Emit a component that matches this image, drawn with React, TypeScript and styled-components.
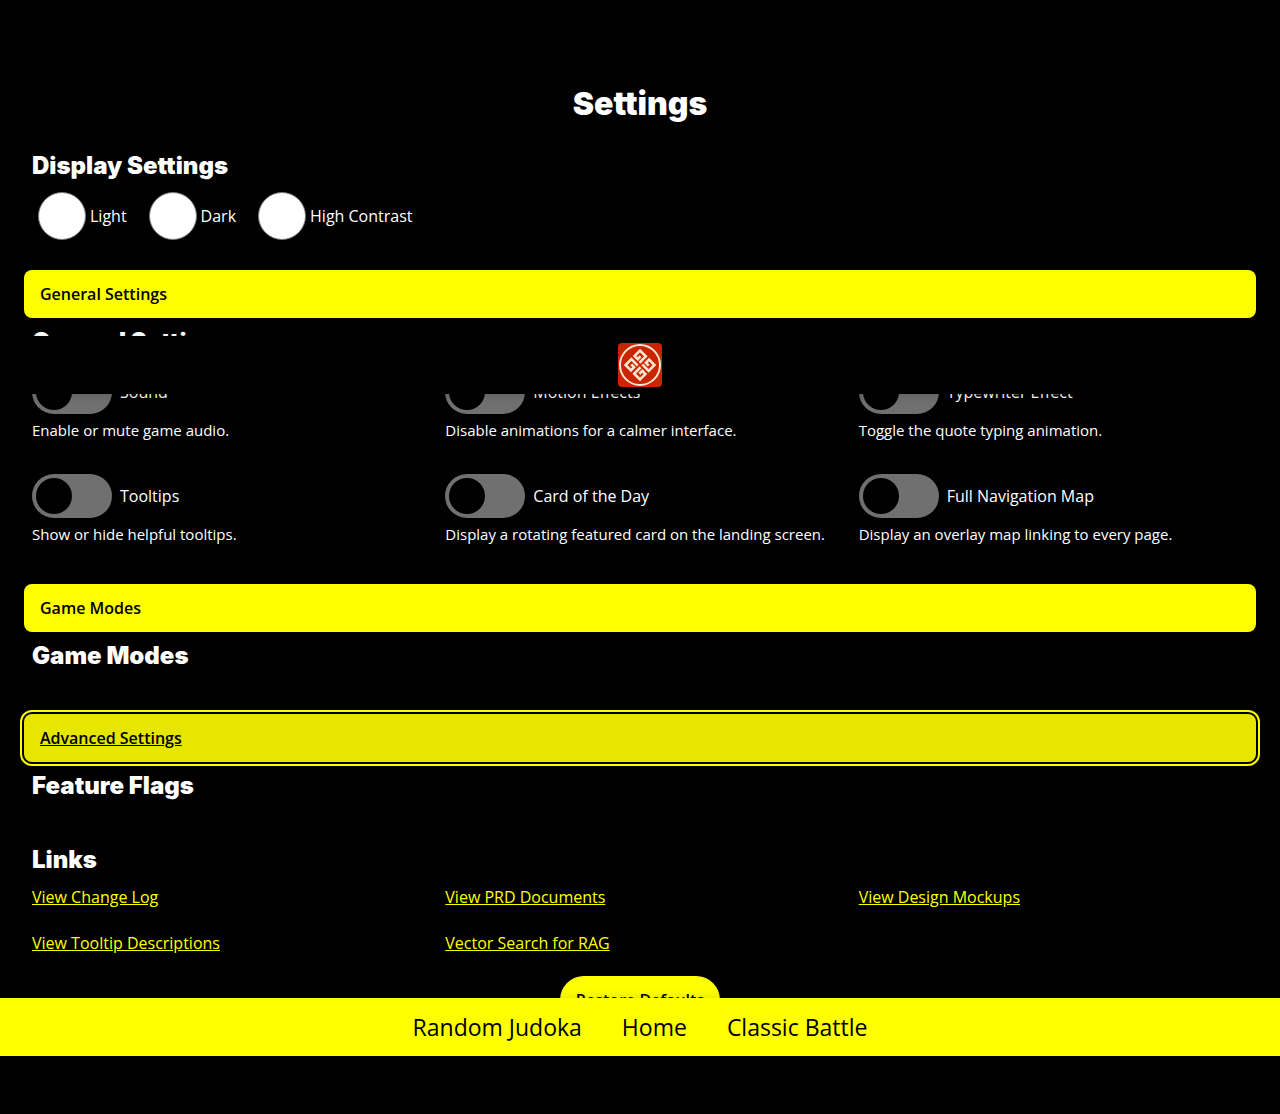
import React, { useState } from "react";
import styled, { createGlobalStyle, css } from "styled-components";

const GlobalStyle = createGlobalStyle`
  *, *::before, *::after { box-sizing: border-box; }
  html { background: #000; }
  body {
    margin: 0;
    background: #000;
    color: #fff;
    font-family: "Open Sans", "Noto Sans", sans-serif;
    font-size: 16px;
    line-height: 24px;
  }
`;

const Page = styled.div`
  position: relative;
  min-height: 100vh;
`;

const TopBar = styled.header`
  position: absolute;
  top: 336px;
  left: 0;
  right: 0;
  height: 58px;
  display: flex;
  align-items: center;
  justify-content: center;
  background: #000;
  box-shadow: 0 2px 8px rgba(0, 0, 0, 0.15);
  z-index: 2;
`;

const LogoLink = styled.a`
  display: block;
  width: 44px;
  height: 44px;
`;

const BottomBar = styled.nav`
  position: absolute;
  bottom: 58px;
  left: 0;
  right: 0;
  height: 58px;
  display: flex;
  align-items: center;
  justify-content: center;
  gap: 40px;
  background: #ff0;
  box-shadow: 0 -2px 8px rgba(0, 0, 0, 0.1);
  z-index: 2;
`;

const NavLink = styled.a`
  color: #000;
  font-size: 23px;
  line-height: 32px;
  text-decoration: none;
`;

const Main = styled.main`
  display: flex;
  flex-direction: column;
  padding: 84px 24px 90px;
`;

const Title = styled.h1`
  margin: 0 0 26px;
  font-family: Inter, sans-serif;
  font-size: 32px;
  font-weight: 900;
  line-height: 40px;
  text-align: center;
`;

const Heading = styled.h2`
  margin: 0 0 10px;
  font-family: Inter, sans-serif;
  font-size: 24px;
  font-weight: 900;
  line-height: 32px;
`;

const Section = styled.section<{ $collapsible?: boolean }>`
  padding: 0 8px;
  margin-bottom: 30px;
  ${(p) => p.$collapsible && css`padding-top: 8px;`}
`;

const LinksSection = styled(Section)`
  margin-bottom: 22px;
`;

const RadioRow = styled.div`
  display: flex;
  gap: 22px;
  padding-left: 6px;
`;

const RadioLabel = styled.label`
  display: flex;
  align-items: center;
  gap: 4px;
`;

const Radio = styled.input`
  appearance: none;
  width: 48px;
  height: 48px;
  margin: 0;
  border: 1px solid #767676;
  border-radius: 50%;
  background: #fff;
  &:checked { border: 12px solid #ff0; }
`;

const SectionToggle = styled.button<{ $active?: boolean }>`
  width: 100%;
  height: 48px;
  padding: 0 16px;
  border: 0;
  border-radius: 8px;
  background: #ff0;
  color: #000;
  font: 600 16px/24px "Open Sans", "Noto Sans", sans-serif;
  text-align: left;
  cursor: pointer;
  ${(p) =>
    p.$active &&
    css`
      background: #e6e600;
      text-decoration: underline;
      outline: 2px solid #ff0;
      outline-offset: 2px;
    `}
`;

const Grid = styled.div`
  display: grid;
  grid-template-columns: repeat(3, minmax(0, 1fr));
  gap: 24px;
`;

const Option = styled.div`
  min-height: 80px;
`;

const SwitchLabel = styled.label`
  display: flex;
  align-items: center;
  gap: 8px;
`;

const Switch = styled.input`
  appearance: none;
  flex: none;
  width: 80px;
  height: 44px;
  margin: 0;
  padding: 4px;
  border-radius: 22px;
  background: #707070;
  &::before {
    content: "";
    display: block;
    width: 36px;
    height: 36px;
    border-radius: 50%;
    background: #000;
  }
  &:checked { background: #ff0; }
  &:checked::before { margin-left: 36px; }
`;

const Description = styled.p`
  margin: 4px 0 0;
  font-size: 15px;
  line-height: 24px;
`;

const OptionGrid = styled(Grid)`
  padding-top: 2px;
`;

const LinkItem = styled.a`
  justify-self: start;
  color: #ff0;
  line-height: 22px;
  text-decoration: underline;
`;

const ResetButton = styled.button`
  align-self: center;
  height: 48px;
  padding: 0 16px;
  border: 0;
  border-radius: 24px;
  background: #ff0;
  color: #000;
  font: 600 16px/24px "Open Sans", "Noto Sans", sans-serif;
`;

const options = [
  { id: "sound", name: "Sound", text: "Enable or mute game audio." },
  { id: "motion", name: "Motion Effects", text: "Disable animations for a calmer interface." },
  { id: "typewriter", name: "Typewriter Effect", text: "Toggle the quote typing animation." },
  { id: "tooltips", name: "Tooltips", text: "Show or hide helpful tooltips." },
  { id: "card", name: "Card of the Day", text: "Display a rotating featured card on the landing screen." },
  { id: "map", name: "Full Navigation Map", text: "Display an overlay map linking to every page." },
];

const links = [
  "View Change Log",
  "View PRD Documents",
  "View Design Mockups",
  "View Tooltip Descriptions",
  "Vector Search for RAG",
];

function Logo() {
  return (
    <svg width="44" height="44" viewBox="0 0 44 44" aria-hidden="true">
      <rect width="44" height="44" rx="4" fill="#cb2400" />
      <circle cx="22" cy="22" r="20" fill="none" stroke="#f7e6cf" strokeWidth="2" />
      <g transform="translate(22 22) rotate(45)" fill="none" stroke="#f7e6cf" strokeWidth="2.6">
        {[0, 90, 180, 270].map((angle) => (
          <path key={angle} transform={`rotate(${angle})`} d="M-2 -1.2V-10.2H-10.2V-2.6H-5.8V-6.6" />
        ))}
      </g>
    </svg>
  );
}

export default function App() {
  const [theme, setTheme] = useState("");
  const [enabled, setEnabled] = useState<string[]>([]);
  const flip = (id: string) =>
    setEnabled((list) => (list.includes(id) ? list.filter((x) => x !== id) : [...list, id]));

  return (
    <Page>
      <GlobalStyle />
      <TopBar>
        <LogoLink href="#" aria-label="Home">
          <Logo />
        </LogoLink>
      </TopBar>
      <Main>
        <Title>Settings</Title>
        <Section>
          <Heading>Display Settings</Heading>
          <RadioRow>
            {["Light", "Dark", "High Contrast"].map((name) => (
              <RadioLabel key={name}>
                <Radio type="radio" name="theme" checked={theme === name} onChange={() => setTheme(name)} />
                {name}
              </RadioLabel>
            ))}
          </RadioRow>
        </Section>
        <SectionToggle type="button">General Settings</SectionToggle>
        <Section $collapsible>
          <Heading>General Settings</Heading>
          <OptionGrid>
            {options.map((o) => (
              <Option key={o.id}>
                <SwitchLabel>
                  <Switch
                    type="checkbox"
                    checked={enabled.includes(o.id)}
                    onChange={() => flip(o.id)}
                    aria-describedby={`${o.id}-text`}
                  />
                  {o.name}
                </SwitchLabel>
                <Description id={`${o.id}-text`}>{o.text}</Description>
              </Option>
            ))}
          </OptionGrid>
        </Section>
        <SectionToggle type="button">Game Modes</SectionToggle>
        <Section $collapsible>
          <Heading>Game Modes</Heading>
          <OptionGrid />
        </Section>
        <SectionToggle type="button" $active>Advanced Settings</SectionToggle>
        <Section $collapsible>
          <Heading>Feature Flags</Heading>
          <OptionGrid />
        </Section>
        <LinksSection>
          <Heading>Links</Heading>
          <Grid>
            {links.map((name) => (
              <LinkItem key={name} href="#">{name}</LinkItem>
            ))}
          </Grid>
        </LinksSection>
        <ResetButton type="button">Restore Defaults</ResetButton>
      </Main>
      <BottomBar>
        <NavLink href="#">Random Judoka</NavLink>
        <NavLink href="#">Home</NavLink>
        <NavLink href="#">Classic Battle</NavLink>
      </BottomBar>
    </Page>
  );
}
